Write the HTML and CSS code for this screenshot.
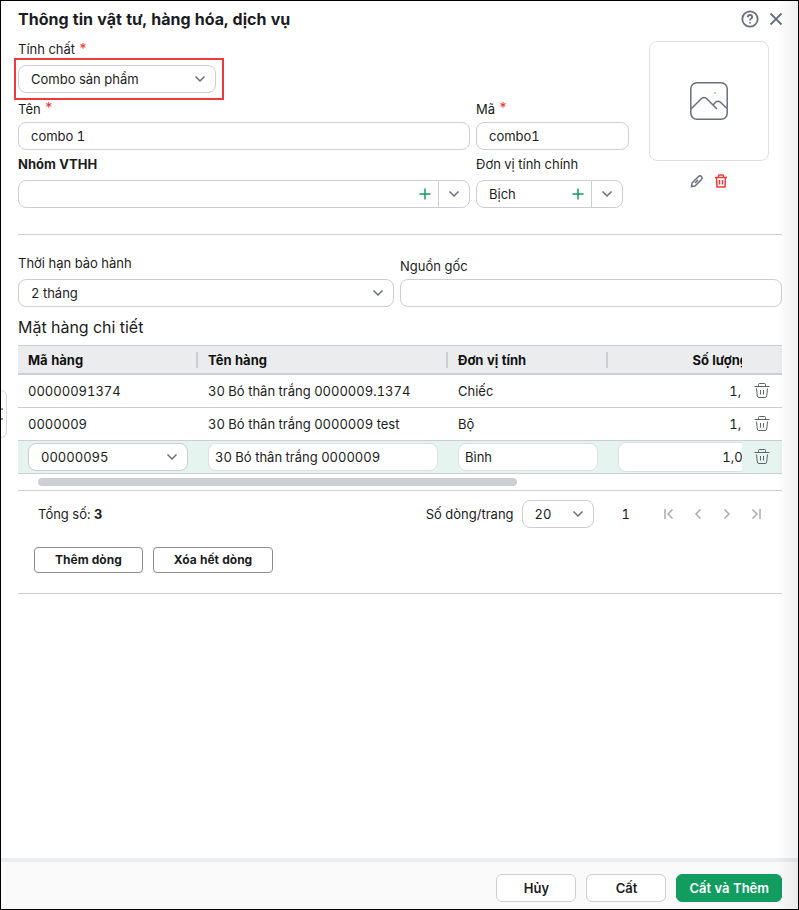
FILE: index.html
```html
<!DOCTYPE html>
<html lang="vi">
  <head>
    <meta charset="UTF-8" />
    <meta name="viewport" content="width=device-width, initial-scale=1.0" />
    <title>Thông tin vật tư, hàng hóa, dịch vụ</title>
    <link rel="stylesheet" href="styles.css">
  </head>
  <body>
    <!-- shared icons -->
    <svg class="sprite" aria-hidden="true">
      <symbol id="chevron" viewBox="0 0 12 12">
        <path d="M1.500 3.500L6 8l4.500-4.500" />
      </symbol>
      <symbol id="plus" viewBox="0 0 12 12">
        <path d="M6 .5v11M.5 6h11" />
      </symbol>
      <symbol id="trash" viewBox="0 0 16 16">
        <path d="M.5 3.500h15M4.500 3.500V1.500Q4.500.5 5.500.5h5Q11.500.5 11.500 1.500V3.500M2.500 5.500l.8 7.500Q3.500 14.500 5 14.500h6q1.500 0 1.700-1.500l.8-7.500M6.500 7v4.500M9.500 7v4.500" />
      </symbol>
    </svg>

    <button class="side-handle" type="button" aria-label="Mở rộng">
      <svg width="3" height="12" viewBox="0 0 3 12"><path d="M0 1h2M0 11h2" /></svg>
    </button>

    <header class="header">
      <h1>Thông tin vật tư, hàng hóa, dịch vụ</h1>
      <div class="header-icons">
        <button class="icon-btn" type="button" aria-label="Trợ giúp">
          <svg width="18" height="18" viewBox="0 0 18 18">
            <circle cx="9" cy="9" r="7.700" />
            <path d="M6.800 7.300Q6.800 5 9 5t2.200 2Q11.200 8.200 10 8.800 9 9.300 9 10.500M9 12.200v1.400" />
          </svg>
        </button>
        <button class="icon-btn" type="button" aria-label="Đóng">
          <svg width="14" height="14" viewBox="0 0 14 14">
            <path d="M1.500 1.500l11 11M12.500 1.500l-11 11" />
          </svg>
        </button>
      </div>
    </header>

    <main class="content">
      <section class="general">
        <div class="fields">
          <div class="field wide-gap full">
            <label for="type">Tính chất <span class="required">*</span></label>
            <div class="select type-select">
              <select id="type"><option>Combo sản phẩm</option></select>
              <svg class="chevron"><use href="#chevron" /></svg>
            </div>
          </div>
          <div class="field">
            <label for="name">Tên <span class="required up">*</span></label>
            <input class="input" id="name" type="text" value="combo 1">
          </div>
          <div class="field">
            <label for="code">Mã <span class="required up">*</span></label>
            <input class="input" id="code" type="text" value="combo1">
          </div>
          <div class="field wide-gap">
            <label class="bold" for="group">Nhóm VTHH</label>
            <div class="combo">
              <input id="group" type="text">
              <button class="add" type="button" aria-label="Thêm nhóm"><svg><use href="#plus" /></svg></button>
              <button class="drop" type="button" aria-label="Chọn nhóm"><svg><use href="#chevron" /></svg></button>
            </div>
          </div>
          <div class="field wide-gap unit">
            <label for="unit">Đơn vị tính chính</label>
            <div class="combo">
              <input id="unit" type="text" value="Bịch">
              <button class="add" type="button" aria-label="Thêm đơn vị"><svg><use href="#plus" /></svg></button>
              <button class="drop" type="button" aria-label="Chọn đơn vị"><svg><use href="#chevron" /></svg></button>
            </div>
          </div>
        </div>

        <div class="photo">
          <div class="photo-box">
            <svg width="38" height="38" viewBox="0 0 38 38">
              <rect x=".8" y=".8" width="36.400" height="36.400" rx="6" />
              <path d="M1 27L11.500 16.500Q14 14.500 16.500 16.500L27 27M23 23l2.500-2.700Q28 18.200 30.500 20.300L37 26.500" />
              <circle class="dot" cx="25" cy="11" r="1" />
            </svg>
          </div>
          <div class="photo-actions">
            <button class="icon-btn" type="button" aria-label="Sửa ảnh">
              <svg width="14" height="14" viewBox="0 0 14 14">
                <path d="M1.500 12.500l.5-3.500L8.500 2.500q1.700-1.500 3 0t0 3L5 12zM8 6L5 9" />
              </svg>
            </button>
            <button class="icon-btn danger" type="button" aria-label="Xóa ảnh">
              <svg width="14" height="14" viewBox="0 0 14 14">
                <path d="M1 3.500h12M4.500 3.500V1.800Q4.500 1 5.300 1h3.400q.8 0 .8.800v1.700M2.500 3.500l.5 9.500h8l.5-9.500M5.500 6v4.500M8.500 6v4.500" />
              </svg>
            </button>
          </div>
        </div>
      </section>

      <section class="extra">
        <div class="field wide-gap">
          <label for="warranty">Thời hạn bảo hành</label>
          <div class="select">
            <select id="warranty"><option>2 tháng</option></select>
            <svg class="chevron"><use href="#chevron" /></svg>
          </div>
        </div>
        <div class="field">
          <label for="origin">Nguồn gốc</label>
          <input class="input" id="origin" type="text">
        </div>
      </section>

      <section class="details">
        <h2>Mặt hàng chi tiết</h2>
        <div class="table-wrap">
          <table>
            <colgroup>
              <col class="col-code">
              <col class="col-name">
              <col class="col-unit">
              <col class="col-qty">
              <col class="col-delete">
            </colgroup>
            <thead>
              <tr>
                <th>Mã hàng</th>
                <th>Tên hàng</th>
                <th>Đơn vị tính</th>
                <th class="number">Số lượng</th>
                <th class="pinned"></th>
              </tr>
            </thead>
            <tbody>
              <tr>
                <td>00000091374</td>
                <td>30 Bó thân trắng 0000009.1374</td>
                <td>Chiếc</td>
                <td class="number">1,00</td>
                <td class="pinned"><button class="icon-btn" type="button" aria-label="Xóa dòng"><svg><use href="#trash" /></svg></button></td>
              </tr>
              <tr>
                <td>0000009</td>
                <td>30 Bó thân trắng 0000009 test</td>
                <td>Bộ</td>
                <td class="number">1,00</td>
                <td class="pinned"><button class="icon-btn" type="button" aria-label="Xóa dòng"><svg><use href="#trash" /></svg></button></td>
              </tr>
              <tr class="editing">
                <td>
                  <div class="select">
                    <select aria-label="Mã hàng"><option>00000095</option></select>
                    <svg class="chevron"><use href="#chevron" /></svg>
                  </div>
                </td>
                <td><input class="input" type="text" aria-label="Tên hàng" value="30 Bó thân trắng 0000009"></td>
                <td><input class="input" type="text" aria-label="Đơn vị tính" value="Bình"></td>
                <td class="number"><input class="input" type="text" aria-label="Số lượng" value="1,00"></td>
                <td class="pinned"><button class="icon-btn" type="button" aria-label="Xóa dòng"><svg><use href="#trash" /></svg></button></td>
              </tr>
            </tbody>
          </table>
        </div>
        <div class="scrollbar"><div class="thumb"></div></div>

        <div class="pager">
          <span class="total">Tổng số: <b>3</b></span>
          <label for="page-size">Số dòng/trang</label>
          <div class="select page-size">
            <select id="page-size"><option>20</option></select>
            <svg class="chevron"><use href="#chevron" /></svg>
          </div>
          <span class="page">1</span>
          <div class="page-nav">
            <button class="icon-btn" type="button" aria-label="Trang đầu"><svg viewBox="0 0 12 12"><path d="M2 1v10M9.500 1.500L5 6l4.500 4.500" /></svg></button>
            <button class="icon-btn" type="button" aria-label="Trang trước"><svg viewBox="0 0 12 12"><path d="M8.500 1.500L4 6l4.500 4.500" /></svg></button>
            <button class="icon-btn" type="button" aria-label="Trang sau"><svg viewBox="0 0 12 12"><path d="M3.500 1.500L8 6l-4.500 4.500" /></svg></button>
            <button class="icon-btn" type="button" aria-label="Trang cuối"><svg viewBox="0 0 12 12"><path d="M10 1v10M2.500 1.500L7 6l-4.500 4.500" /></svg></button>
          </div>
        </div>

        <div class="row-actions">
          <button type="button">Thêm dòng</button>
          <button type="button">Xóa hết dòng</button>
        </div>
      </section>
    </main>

    <footer class="footer">
      <button class="btn" type="button">Hủy</button>
      <button class="btn" type="button">Cất</button>
      <button class="btn primary" type="button">Cất và Thêm</button>
    </footer>
  </body>
</html>
```
FILE: styles.css
```css
* {
  box-sizing: border-box;
}
body {
  position: relative;
  display: flex;
  flex-direction: column;
  min-height: 100vh;
  margin: 0;
  border: 1px solid #000;
  background-color: #fff;
  color: #1b1d22;
  font-family: Inter, "Liberation Sans", sans-serif;
  font-size: 13px;
  font-variant-numeric: tabular-nums;
  line-height: 18px;
}
/* shade along the right edge */
body::after {
  content: "";
  position: absolute;
  top: 0;
  right: 0;
  bottom: 0;
  width: 20px;
  background: linear-gradient(to right, transparent, rgba(0, 0, 0, 0.06));
  pointer-events: none;
}
input,
select,
button {
  font: inherit;
  color: inherit;
}
svg {
  display: block;
  fill: none;
  stroke: #6b6f7b;
  stroke-width: 1.5;
}
.sprite {
  position: absolute;
  width: 0;
  height: 0;
}
.icon-btn {
  padding: 0;
  border: none;
  background: none;
  cursor: pointer;
}
.side-handle {
  position: absolute;
  top: 389px;
  left: -1px;
  width: 7px;
  height: 48px;
  padding: 0;
  border: 1px solid #d5d7dc;
  border-left-color: #000;
  border-radius: 0 6px 6px 0;
  background-color: #fff;
}

/* header */
.header {
  display: flex;
  justify-content: space-between;
  align-items: center;
  height: 39px;
  padding: 0 15px 4px 17px;
}
h1 {
  margin: 0;
  font-size: 16px;
  font-weight: 700;
  line-height: 24px;
}
.header-icons {
  display: flex;
  align-items: center;
  gap: 10px;
}
.header-icons svg {
  stroke-width: 1.8;
}

/* form */
.content {
  flex: 1;
  padding: 0 16px 0 17px;
}
.general {
  display: flex;
  gap: 20px;
  padding: 0 13px 26px 0;
  border-bottom: 1px solid #ccced3;
}
.fields {
  flex: 1;
  display: grid;
  grid-template-columns: minmax(0, 452fr) minmax(0, 153fr);
  column-gap: 6px;
  align-content: start;
}
.full {
  grid-column: 1 / -1;
  margin-bottom: 7px;
}
.field {
  display: flex;
  flex-direction: column;
  gap: 4px;
}
.wide-gap {
  gap: 7px;
}
.fields .field:nth-child(n + 4) {
  margin-top: 5px;
}
.unit {
  margin-right: 6px;
}
.bold {
  font-weight: 700;
}
.required {
  color: #f5302b;
  font-size: 14px;
  line-height: 14px;
}
.up {
  vertical-align: 1px;
}
.input,
.select select,
.combo {
  width: 100%;
  height: 28px;
  border: 1px solid #ccced3;
  border-radius: 8px;
  background-color: #fff;
}
.input,
.select select {
  padding: 0 12px;
}
.select {
  display: grid;
  align-items: center;
}
.select select {
  grid-area: 1 / 1;
  appearance: none;
}
.select .chevron {
  grid-area: 1 / 1;
  justify-self: end;
  width: 12px;
  height: 12px;
  margin-right: 10px;
  pointer-events: none;
}
.type-select {
  position: relative;
  width: 198px;
}
.type-select::after {
  content: "";
  position: absolute;
  inset: -7px -8px -7px -4px;
  border: 2px solid #ee3a3d;
  pointer-events: none;
}
.combo {
  display: flex;
  overflow: hidden;
}
.combo input {
  flex: 1;
  min-width: 0;
  padding: 0 0 0 12px;
  border: none;
  background: none;
}
.combo button {
  display: grid;
  place-items: center;
  padding: 0;
  border: none;
  background: none;
}
.combo .add {
  width: 26px;
}
.combo .drop {
  width: 31px;
  border-left: 1px solid #ccced3;
}
.combo svg {
  width: 12px;
  height: 12px;
}
.combo .add svg {
  stroke: #119c60;
}
.photo-box {
  display: grid;
  place-items: center;
  width: 120px;
  height: 120px;
  margin-top: 1px;
  border: 1px solid #dedfe2;
  border-radius: 8px;
}
.photo-box .dot {
  fill: #b5b7bd;
  stroke: none;
}
.photo-actions {
  display: flex;
  justify-content: center;
  gap: 10px;
  margin-top: 13px;
}
.danger svg {
  stroke: #ee3a3d;
}
.extra {
  display: grid;
  grid-template-columns: 376fr 382fr;
  column-gap: 6px;
  align-items: end;
  padding-top: 19px;
}

/* detail table */
h2 {
  margin: 10px 0 8px;
  font-size: 16px;
  font-weight: 400;
  line-height: 20px;
}
.table-wrap {
  overflow: hidden;
}
table {
  width: 790px;
  min-width: 100%;
  border-spacing: 0;
  table-layout: fixed;
}
.col-code {
  width: 180px;
}
.col-name {
  width: 250px;
}
.col-unit,
.col-qty {
  width: 160px;
}
.col-delete {
  width: 40px;
}
th {
  height: 30px;
  padding: 0 10px;
  border-top: 1px solid #ccced3;
  border-bottom: 2px solid #ccced3;
  background: #ebecee linear-gradient(#ccced3, #ccced3) no-repeat right 0 center / 2px 16px;
  color: #111;
  font-weight: 700;
  text-align: left;
}
td {
  height: 33px;
  padding: 0 10px;
  border-bottom: 1px solid #ccced3;
  background-color: #fff;
}
th.number,
td.number {
  text-align: right;
}
th.number {
  padding-right: 20px;
}
.pinned {
  position: sticky;
  right: 0;
}
th.pinned {
  background-image: none;
}
.pinned svg {
  width: 16px;
  height: 16px;
  stroke: #5f6370;
  stroke-width: 1;
}
td.pinned {
  padding: 0 12px;
}
.pinned .icon-btn {
  display: block;
}
.editing td {
  background-color: #e5f4ef;
}
.editing .input {
  display: block;
  padding: 0 6px;
  border-color: #dedfe2;
}
.editing .number .input {
  height: 30px;
  text-align: right;
}
.scrollbar {
  padding: 4px 40px 4px 20px;
  border-bottom: 1px solid #ccced3;
}
.thumb {
  width: 68%;
  height: 8px;
  border-radius: 4px;
  background-color: #ccd0d5;
}
.pager {
  display: flex;
  align-items: center;
  padding: 9px 20px 0;
}
.total {
  flex: 1;
}
.page-size {
  width: 72px;
  margin: 0 28px 0 8px;
}
.page-nav {
  display: flex;
  gap: 17px;
  margin-left: 33px;
}
.page-nav svg {
  width: 12px;
  height: 12px;
  stroke: #a9abb0;
}
.row-actions {
  display: flex;
  gap: 10px;
  padding: 19px 16px 20px;
  border-bottom: 1px solid #ccced3;
}
.row-actions button {
  height: 26px;
  padding: 0 20px;
  border: 1px solid #8a8d98;
  border-radius: 4px;
  background-color: #fff;
  font-size: 12px;
  font-weight: 700;
}

/* footer */
.footer {
  display: flex;
  justify-content: flex-end;
  gap: 10px;
  padding: 12px 16px 7px;
  border-top: 4px solid #ebecee;
  background-color: #fafafa;
}
.btn {
  min-width: 80px;
  height: 28px;
  padding: 0 12px;
  border: 1px solid #ccced3;
  border-radius: 6px;
  background-color: #fff;
  font-weight: 600;
}
.primary {
  border-color: #119c60;
  background-color: #119c60;
  color: #fff;
}
```
